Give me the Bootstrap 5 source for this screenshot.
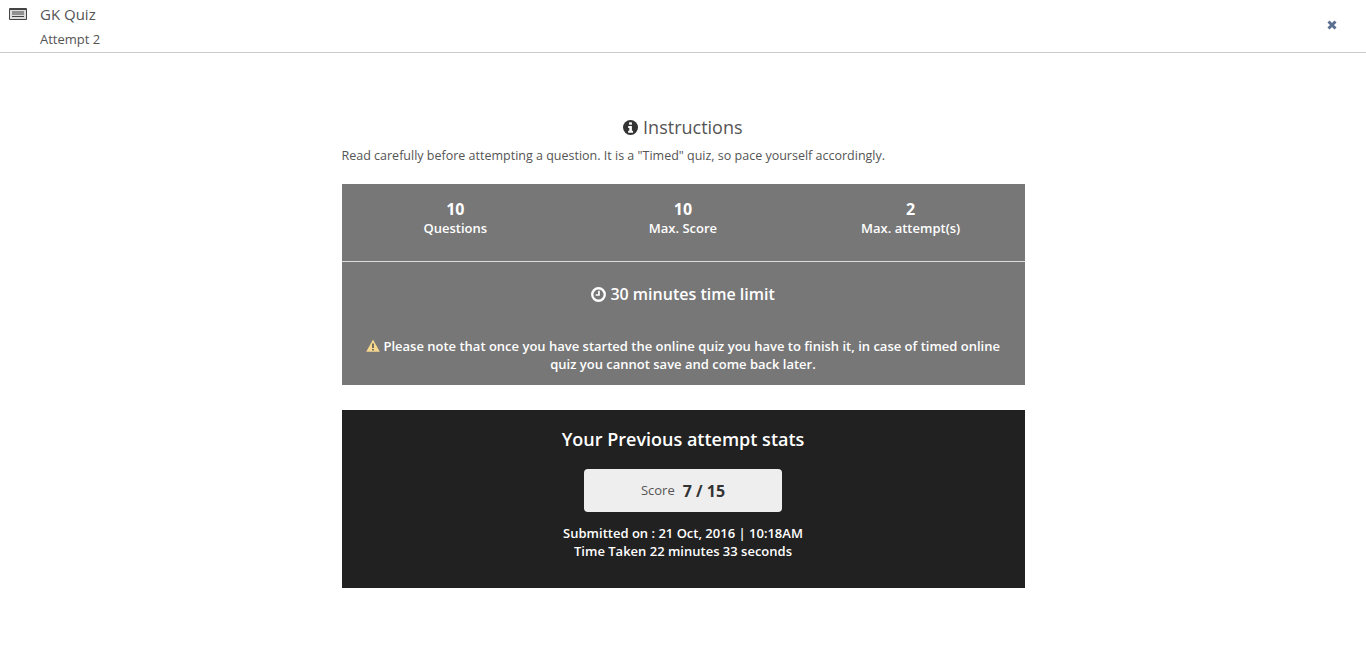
<!DOCTYPE html>
<html lang="en">
<head>
  <meta charset="UTF-8">
  <title>GK Quiz</title>
  <link href="https://cdn.jsdelivr.net/npm/bootstrap@5.3.3/dist/css/bootstrap.min.css" rel="stylesheet">
  <style>
    body { font-family: "Open Sans", sans-serif; color: #444; background: #fff; height: 662px; overflow: hidden; }
    .quiz-head { height: 53px; border-bottom: 1px solid #ccc; padding-left: 9px; padding-right: 29px; }
    .head-icon { width: 18px; height: 12px; margin-top: 8px; margin-right: 13px; }
    .quiz-title { font-size: 15px; line-height: 20px; margin-top: 4px; color: #555; }
    .quiz-attempt { font-size: 13px; line-height: 18px; margin-top: 6px; color: #555; }
    .close-icon { width: 10px; height: 10px; margin-top: 20px; }
    .quiz-main { width: 683px; margin: 0 auto; }
    .instr-title { font-size: 18px; line-height: 24px; margin-top: 62px; color: #555; }
    .instr-title svg { width: 15px; height: 15px; vertical-align: -1px; }
    .instr-text { font-size: 12.5px; line-height: 18px; margin-top: 8px; margin-bottom: 19px; color: #555; }
    .info-box { background: #777; color: #fff; }
    .stat-row { height: 78px; border-bottom: 1px solid #ddd; padding-top: 15px; }
    .stat-num { font-size: 16px; font-weight: 700; line-height: 20px; }
    .stat-label { font-size: 13px; font-weight: 600; line-height: 18px; }
    .time-line { font-size: 16px; line-height: 22px; font-weight: 600; padding-top: 21px; }
    .time-line svg { width: 15px; height: 15px; vertical-align: -2px; }
    .note-text { font-size: 13px; font-weight: 600; line-height: 18px; padding: 32px 15px 12px; }
    .note-text svg { width: 14px; height: 13px; vertical-align: -1px; }
    .prev-box { background: #212121; color: #fff; margin-top: 25px; height: 178px; padding-top: 17px; }
    .prev-title { font-size: 18px; font-weight: 600; line-height: 24px; }
    .score-pill { width: 198px; height: 43px; background: #eee; border-radius: 4px; color: #555; margin-top: 18px; }
    .score-label { font-size: 13px; margin-right: 8px; }
    .score-value { font-size: 16px; font-weight: 700; color: #333; }
    .prev-line { font-size: 13px; font-weight: 600; line-height: 18px; }
  </style>
</head>
<body>
  <!-- Header -->
  <div class="quiz-head d-flex justify-content-between">
    <div class="d-flex">
      <svg class="head-icon" viewBox="0 0 18 12">
        <rect width="18" height="12" rx="1" fill="#444"/>
        <rect x="1" y="2" width="16" height="9" fill="#ddd"/>
        <path d="M3 4h12M3 6h12M3 8.500h12" stroke="#444" stroke-width="1" fill="none"/>
      </svg>
      <div>
        <div class="quiz-title">GK Quiz</div>
        <div class="quiz-attempt">Attempt 2</div>
      </div>
    </div>
    <svg class="close-icon" viewBox="0 0 10 10">
      <path d="M1.500 1.500L8.500 8.500M8.500 1.500L1.500 8.500" stroke="#5b6f93" stroke-width="3" fill="none"/>
    </svg>
  </div>

  <div class="quiz-main">
    <div class="instr-title text-center">
      <svg viewBox="0 0 16 16">
        <circle cx="8" cy="8" r="8" fill="#333"/>
        <rect x="6.500" y="2.500" width="3" height="2.500" fill="#fff"/>
        <path d="M5.500 6.500h4v5h1.200v2H5.500v-2h1.200v-3H5.500z" fill="#fff"/>
      </svg>
      Instructions
    </div>
    <div class="instr-text">Read carefully before attempting a question. It is a "Timed" quiz, so pace yourself accordingly.</div>

    <div class="info-box text-center">
      <div class="stat-row row g-0">
        <div class="col-4"><div class="stat-num">10</div><div class="stat-label">Questions</div></div>
        <div class="col-4"><div class="stat-num">10</div><div class="stat-label">Max. Score</div></div>
        <div class="col-4"><div class="stat-num">2</div><div class="stat-label">Max. attempt(s)</div></div>
      </div>
      <div class="time-line">
        <svg viewBox="0 0 16 16">
          <circle cx="8" cy="8" r="6.700" fill="none" stroke="#fff" stroke-width="2.500"/>
          <path d="M8.500 4v4.500H5" fill="none" stroke="#fff" stroke-width="1.800"/>
        </svg>
        30 minutes time limit
      </div>
      <div class="note-text">
        <svg viewBox="0 0 14 13">
          <path d="M7 0.500L13.800 12.800H0.200z" fill="#f5d78e"/>
          <path d="M6.200 4.500h1.600v4.500H6.200zM6.200 10h1.600v1.500H6.200z" fill="#555"/>
        </svg>
        Please note that once you have started the online quiz you have to finish it, in case of timed online quiz you cannot save and come back later.
      </div>
    </div>

    <div class="prev-box text-center">
      <div class="prev-title">Your Previous attempt stats</div>
      <div class="score-pill mx-auto d-flex align-items-center justify-content-center">
        <span class="score-label">Score</span><span class="score-value">7 / 15</span>
      </div>
      <div class="prev-line mt-2 pt-1">Submitted on : 21 Oct, 2016 | 10:18AM</div>
      <div class="prev-line prev-gap">Time Taken 22 minutes 33 seconds</div>
    </div>
  </div>
</body>
</html>
